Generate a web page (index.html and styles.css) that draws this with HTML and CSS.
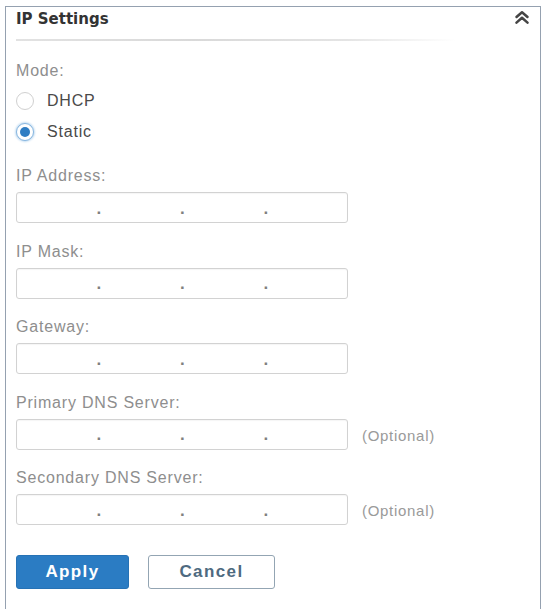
FILE: index.html
```html
<!DOCTYPE html>
<html lang="en">
<head>
<meta charset="utf-8">
<title>IP Settings</title>
<link rel="stylesheet" href="styles.css">
</head>
<body>
<div class="panel">
  <div class="panel-header">
    <span class="panel-title">IP Settings</span>
    <svg class="collapse-icon" width="16" height="14" viewBox="0 0 16 14" aria-hidden="true">
      <path d="M2.5 7 L8 2.2 L13.5 7" fill="none" stroke="#454545" stroke-width="2.5" stroke-linecap="round" stroke-linejoin="round"/>
      <path d="M2.5 12.6 L8 7.8 L13.5 12.6" fill="none" stroke="#454545" stroke-width="2.5" stroke-linecap="round" stroke-linejoin="round"/>
    </svg>
  </div>
  <div class="separator"></div>

  <div class="mode-label label">Mode:</div>
  <div class="options">
    <label class="option"><span class="radio"></span><span class="option-text">DHCP</span></label>
    <label class="option"><span class="radio checked"></span><span class="option-text">Static</span></label>
  </div>

  <div class="fields">
    <div class="field">
      <div class="label">IP Address:</div>
      <div class="field-row">
        <div class="ip-input"><span class="seg"></span><span class="dot">.</span><span class="seg"></span><span class="dot">.</span><span class="seg"></span><span class="dot">.</span><span class="seg"></span></div>
      </div>
    </div>
    <div class="field">
      <div class="label">IP Mask:</div>
      <div class="field-row">
        <div class="ip-input"><span class="seg"></span><span class="dot">.</span><span class="seg"></span><span class="dot">.</span><span class="seg"></span><span class="dot">.</span><span class="seg"></span></div>
      </div>
    </div>
    <div class="field">
      <div class="label">Gateway:</div>
      <div class="field-row">
        <div class="ip-input"><span class="seg"></span><span class="dot">.</span><span class="seg"></span><span class="dot">.</span><span class="seg"></span><span class="dot">.</span><span class="seg"></span></div>
      </div>
    </div>
    <div class="field">
      <div class="label">Primary DNS Server:</div>
      <div class="field-row">
        <div class="ip-input"><span class="seg"></span><span class="dot">.</span><span class="seg"></span><span class="dot">.</span><span class="seg"></span><span class="dot">.</span><span class="seg"></span></div>
        <span class="optional">(Optional)</span>
      </div>
    </div>
    <div class="field">
      <div class="label">Secondary DNS Server:</div>
      <div class="field-row">
        <div class="ip-input"><span class="seg"></span><span class="dot">.</span><span class="seg"></span><span class="dot">.</span><span class="seg"></span><span class="dot">.</span><span class="seg"></span></div>
        <span class="optional">(Optional)</span>
      </div>
    </div>
  </div>

  <div class="actions">
    <button class="btn btn-primary">Apply</button>
    <button class="btn btn-secondary">Cancel</button>
  </div>
</div>
</body>
</html>
```

FILE: styles.css
```css
html, body {
  margin: 0;
  padding: 0;
  background: #ffffff;
  overflow: hidden;
  height: 609px;
}

body {
  font-family: "Liberation Sans", Arial, sans-serif;
}

.panel {
  margin: 6px 0 0 5px;
  width: 536px;
  height: 603px;
  border: 1px solid #95a1b0;
  border-bottom: none;
  padding: 2px 10px 0 10px;
  box-sizing: border-box;
}

.panel-header {
  display: flex;
  justify-content: space-between;
  align-items: flex-start;
  height: 20px;
}

.panel-title {
  font-family: "DejaVu Sans", Verdana, sans-serif;
  font-weight: bold;
  font-size: 15px;
  line-height: 20px;
  color: #333333;
}

.collapse-icon {
  margin-top: 1px;
  display: block;
}

.separator {
  margin-top: 10px;
  width: 440px;
  height: 2px;
  background: linear-gradient(to right, #e2e2e2 0%, #d9d9d9 40%, #e4e4e4 75%, rgba(235,235,235,0) 100%);
}

.label {
  font-size: 16px;
  line-height: 20px;
  letter-spacing: 0.8px;
  color: #8e8e8e;
}

.mode-label {
  margin-top: 20px;
}

.options {
  margin-top: 4px;
  display: flex;
  flex-direction: column;
}

.option {
  display: flex;
  align-items: center;
  height: 31px;
}

.radio {
  width: 18px;
  height: 18px;
  box-sizing: border-box;
  border: 1px solid #d0d0d0;
  border-radius: 50%;
  margin-left: 0;
  margin-right: 13px;
  background: #ffffff;
  display: flex;
  align-items: center;
  justify-content: center;
}

.radio.checked {
  border: 1px solid #86b5df;
  box-shadow: 0 0 2px 1px #c4ddf2;
}

.radio.checked::after {
  content: "";
  width: 10px;
  height: 10px;
  border-radius: 50%;
  background: #2f7dc3;
}

.option-text {
  font-size: 16px;
  line-height: 20px;
  letter-spacing: 0.8px;
  color: #4a4a4a;
}

.fields {
  margin-top: 19px;
}

.field {
  margin-bottom: 18.5px;
}

.field .label {
  margin-bottom: 6px;
}

.field-row {
  display: flex;
  align-items: center;
}

.ip-input {
  width: 332px;
  height: 31px;
  box-sizing: border-box;
  border: 1px solid #d2d2d2;
  border-radius: 3px;
  box-shadow: inset 0 1px 1px rgba(0,0,0,0.04);
  display: flex;
  align-items: center;
}

.seg {
  flex: 1;
}

.dot {
  font-size: 17px;
  font-weight: bold;
  line-height: 20px;
  color: #808080;
  width: 4px;
  text-align: center;
  margin-top: 2px;
}

.optional {
  margin-left: 14px;
  font-size: 15px;
  letter-spacing: 0.7px;
  color: #9a9a9a;
  margin-top: 2px;
}

.actions {
  margin-top: 29.5px;
  display: flex;
  gap: 19px;
}

.btn {
  height: 34px;
  box-sizing: border-box;
  border-radius: 3px;
  font-family: "Liberation Sans", Arial, sans-serif;
  font-weight: bold;
  font-size: 17px;
  letter-spacing: 1.4px;
  padding: 0;
  cursor: pointer;
}

.btn-primary {
  width: 113px;
  background: #2b7cc3;
  border: 1px solid #2672b5;
  color: #ffffff;
}

.btn-secondary {
  width: 127px;
  background: #ffffff;
  border: 1px solid #93a5b3;
  color: #4e6a80;
}
```
